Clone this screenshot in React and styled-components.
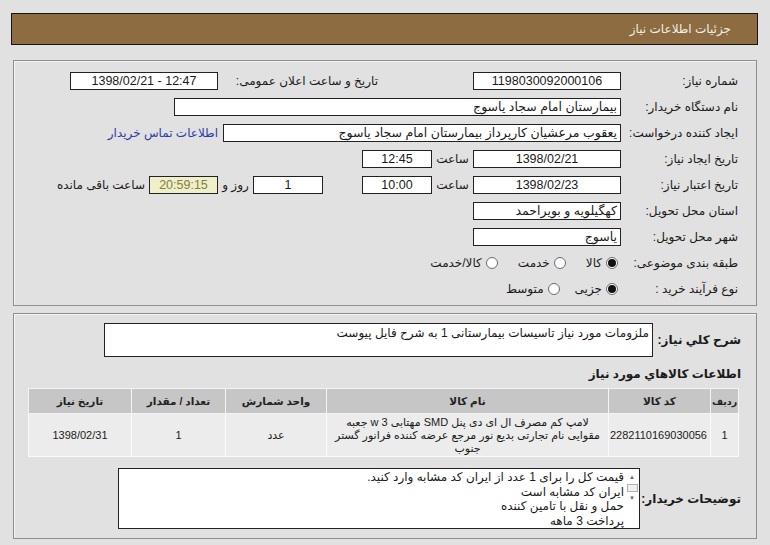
import React from "react";
import styled, { createGlobalStyle } from "styled-components";

const GlobalStyle = createGlobalStyle`
  html, body {
    margin: 0;
    padding: 0;
    background: #e1e1e1;
  }
  body {
    font-family: "Liberation Sans", "DejaVu Sans", Tahoma, sans-serif;
    font-size: 11px;
    color: #1a1a1a;
  }
`;

const Page = styled.div`
  direction: rtl;
  width: 770px;
  height: 545px;
  padding: 13px 13px 0 13px;
  box-sizing: border-box;
  overflow: hidden;
`;

const TitleBar = styled.div`
  height: 32px;
  margin: 0 -1px 15px -2px;
  box-sizing: border-box;
  background: #8c6c40;
  border: 1px solid #161616;
  color: #f2efe8;
  font-size: 12px;
  display: flex;
  align-items: center;
  padding-right: 26px;
`;

const Panel = styled.div`
  border: 1px solid #8e8e8e;
  box-shadow: inset 1px 1px 0 #f4f4f4;
  padding: ${(p) => p.$pad};
  margin-bottom: 7px;
`;

const Row = styled.div`
  display: flex;
  align-items: center;
  height: 26px;
`;

const Label = styled.div`
  width: ${(p) => p.$w || 117}px;
  flex: none;
  font-size: 12px;
  font-weight: ${(p) => (p.$bold ? "bold" : "normal")};
  margin-right: ${(p) => p.$mr || 0}px;
  text-align: ${(p) => p.$align || "right"};
  white-space: nowrap;
`;

const Box = styled.div`
  width: ${(p) => p.$w}px;
  flex: none;
  height: 18px;
  box-sizing: border-box;
  border: 1px solid #222;
  background: ${(p) => (p.$yellow ? "#efefcb" : "#fff")};
  color: ${(p) => (p.$yellow ? "#85803a" : "#1a1a1a")};
  font-size: 12.5px;
  line-height: 16px;
  padding: 0 3px;
  direction: ${(p) => (p.$ltr ? "ltr" : "rtl")};
  text-align: ${(p) => (p.$center ? "center" : "right")};
  margin-right: ${(p) => p.$mr || 0}px;
  white-space: nowrap;
  overflow: hidden;
`;

const ContactLink = styled.a`
  color: #2f3aa8;
  font-size: 12px;
  margin-right: 5px;
  text-decoration: none;
  white-space: nowrap;
`;

const RadioGroup = styled.div`
  display: flex;
  align-items: center;
  gap: ${(p) => p.$gap}px;
  margin-right: 3px;
`;

const RadioItem = styled.label`
  display: flex;
  align-items: center;
  gap: 4px;
  font-size: 12px;
`;

const RadioDot = styled.span`
  width: 12px;
  height: 12px;
  box-sizing: border-box;
  border-radius: 50%;
  border: 1px solid #6b6b6b;
  background: #fff;
  display: flex;
  align-items: center;
  justify-content: center;
  &::after {
    content: "";
    width: 8px;
    height: 8px;
    border-radius: 50%;
    background: ${(p) => (p.$on ? "#111" : "transparent")};
  }
`;

const DescRow = styled.div`
  display: flex;
  align-items: center;
`;

const DescBox = styled.div`
  width: 549px;
  height: 34px;
  box-sizing: border-box;
  border: 1px solid #222;
  background: #fff;
  font-size: 12px;
  padding: 2px 3px;
`;

const Heading = styled.div`
  font-size: 12px;
  font-weight: bold;
  margin: 9px 0 6px 0;
  height: 16px;
  line-height: 16px;
`;

const Table = styled.table`
  width: 710px;
  margin-right: 2px;
  border-collapse: collapse;
  border: 1px solid #c2c2c2;
  table-layout: fixed;
`;

const Th = styled.th`
  width: ${(p) => p.$w}px;
  box-sizing: border-box;
  height: 25px;
  padding: 0;
  background: #c6c6c6;
  border: 1px solid #f4f4f4;
  font-size: ${(p) => (p.$small ? 9.5 : 10.5)}px;
  font-weight: bold;
  color: #222;
  white-space: nowrap;
`;

const Td = styled.td`
  box-sizing: border-box;
  height: 43px;
  padding: 0 3px;
  background: #ececec;
  border: 1px solid #fafafa;
  font-size: 11px;
  line-height: 13px;
  text-align: center;
  vertical-align: middle;
`;

const NotesRow = styled.div`
  display: flex;
  align-items: center;
  margin-top: 11px;
`;

const NotesBox = styled.div`
  width: 522px;
  height: 61px;
  box-sizing: border-box;
  border: 1px solid #222;
  background: #fff;
  display: flex;
  align-items: flex-start;
  padding: 1px 2px 0 0;
`;

const ScrollBar = styled.div`
  width: 10px;
  flex: none;
  margin-top: 3px;
  margin-left: 3px;
  display: flex;
  flex-direction: column;
  align-items: center;
  color: #666;
  font-size: 6px;
  line-height: 9px;
`;

const Thumb = styled.div`
  width: 9px;
  height: 6px;
  border: 1px solid #b0b0b0;
  background: #f0f0f0;
  margin: 2px 0;
`;

const NotesText = styled.div`
  font-size: 12px;
  line-height: 14.5px;
`;

function Radio({ on, children }) {
  return (
    <RadioItem>
      <RadioDot $on={on} />
      {children}
    </RadioItem>
  );
}

export default function App() {
  return (
    <Page>
      <GlobalStyle />
      <TitleBar>جزئیات اطلاعات نیاز</TitleBar>

      <Panel $pad="7px 18px 3px 0">
        <Row>
          <Label>شماره نیاز:</Label>
          <Box $w={148} $center>1198030092000106</Box>
          <Label $w={160} $mr={95}>تاریخ و ساعت اعلان عمومی:</Label>
          <Box $w={148} $center $ltr>1398/02/21 - 12:47</Box>
        </Row>
        <Row>
          <Label>نام دستگاه خریدار:</Label>
          <Box $w={447}>بیمارستان امام سجاد یاسوج</Box>
        </Row>
        <Row>
          <Label>ایجاد کننده درخواست:</Label>
          <Box $w={398}>یعقوب مرعشیان کارپرداز بیمارستان امام سجاد یاسوج</Box>
          <ContactLink href="#">اطلاعات تماس خریدار</ContactLink>
        </Row>
        <Row>
          <Label>تاریخ ایجاد نیاز:</Label>
          <Box $w={148} $center>1398/02/21</Box>
          <Label $w={41} $align="center">ساعت</Label>
          <Box $w={70} $center>12:45</Box>
        </Row>
        <Row>
          <Label>تاریخ اعتبار نیاز:</Label>
          <Box $w={148} $center>1398/02/23</Box>
          <Label $w={41} $align="center">ساعت</Label>
          <Box $w={70} $center>10:00</Box>
          <Box $w={70} $mr={39} $center>1</Box>
          <Label $w={35} $align="center">روز و</Label>
          <Box $w={69} $center $yellow>20:59:15</Box>
          <Label $w={96} $mr={4}>ساعت باقی مانده</Label>
        </Row>
        <Row>
          <Label>استان محل تحویل:</Label>
          <Box $w={148}>کهگیلویه و بویراحمد</Box>
        </Row>
        <Row>
          <Label>شهر محل تحویل:</Label>
          <Box $w={148}>یاسوج</Box>
        </Row>
        <Row>
          <Label>طبقه بندی موضوعی:</Label>
          <RadioGroup $gap={20}>
            <Radio on>کالا</Radio>
            <Radio>خدمت</Radio>
            <Radio>کالا/خدمت</Radio>
          </RadioGroup>
        </Row>
        <Row>
          <Label>نوع فرآیند خرید :</Label>
          <RadioGroup $gap={15}>
            <Radio on>جزیی</Radio>
            <Radio>متوسط</Radio>
          </RadioGroup>
        </Row>
      </Panel>

      <Panel $pad="9px 15px 9px 0">
        <DescRow>
          <Label $w={88} $bold>شرح کلي نیاز:</Label>
          <DescBox>ملزومات مورد نیاز تاسیسات بیمارستانی 1 به شرح فایل پیوست</DescBox>
        </DescRow>
        <Heading>اطلاعات کالاهاي مورد نیاز</Heading>
        <Table>
          <thead>
            <tr>
              <Th $w={28} $small>ردیف</Th>
              <Th $w={102}>کد کالا</Th>
              <Th $w={282}>نام کالا</Th>
              <Th $w={101}>واحد شمارش</Th>
              <Th $w={94}>تعداد / مقدار</Th>
              <Th $w={103}>تاریخ نیاز</Th>
            </tr>
          </thead>
          <tbody>
            <tr>
              <Td>1</Td>
              <Td>2282110169030056</Td>
              <Td>
                لامپ کم مصرف ال ای دی پنل SMD مهتابی 3 w جعبه مقوایی نام تجارتی
                بدیع نور مرجع عرضه کننده فرانور گستر جنوب
              </Td>
              <Td>عدد</Td>
              <Td>1</Td>
              <Td>1398/02/31</Td>
            </tr>
          </tbody>
        </Table>
        <NotesRow>
          <Label $w={101} $bold>توضیحات خریدار:</Label>
          <NotesBox>
            <ScrollBar>
              <span>▲</span>
              <Thumb />
              <span>▼</span>
            </ScrollBar>
            <NotesText>
              قیمت کل را برای 1 عدد از ایران کد مشابه وارد کنید.
              <br />
              ایران کد مشابه است
              <br />
              حمل و نقل با تامین کننده
              <br />
              پرداخت 3 ماهه
            </NotesText>
          </NotesBox>
        </NotesRow>
      </Panel>
    </Page>
  );
}
